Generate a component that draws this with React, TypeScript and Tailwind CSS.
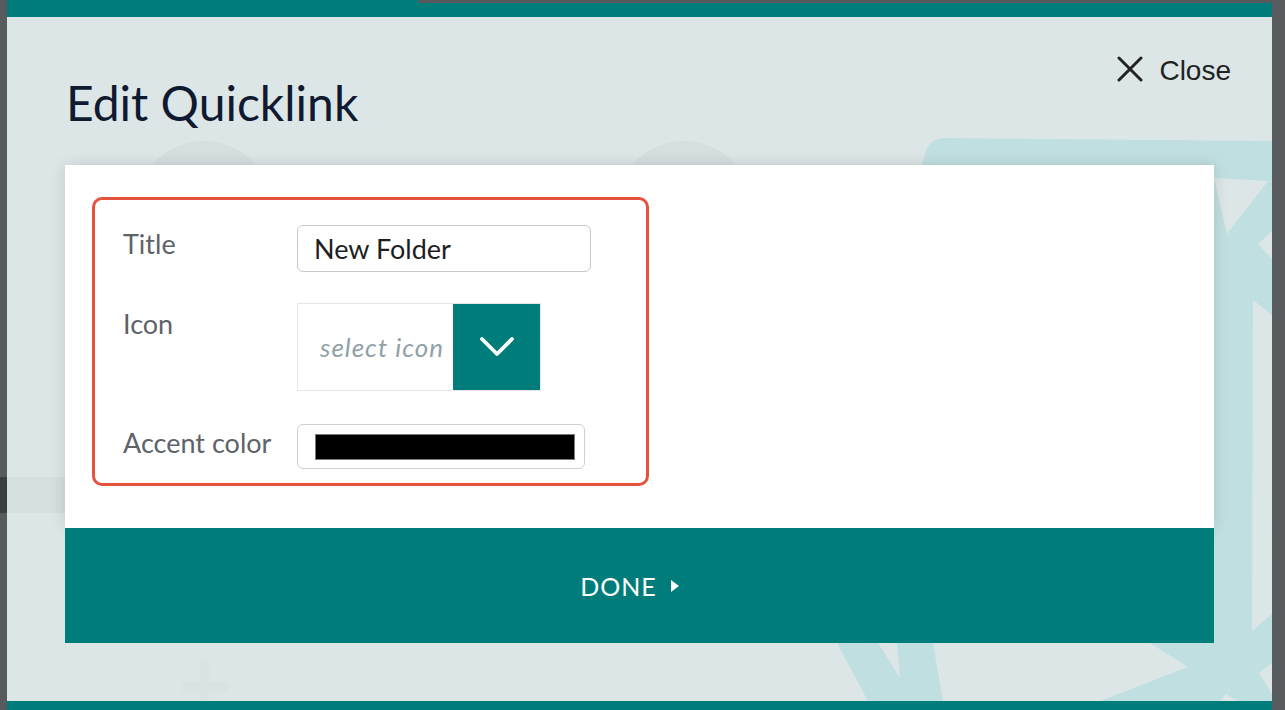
import React from "react";

const TEAL = "#007d7a";

function Decor() {
  return (
    <svg
      className="absolute left-0 top-0"
      width={1265}
      height={684}
      viewBox="0 0 1265 684"
      aria-hidden="true"
    >
      <g transform="translate(-7,-17)">
        {/* faint circles left */}
        <circle cx={204} cy={209} r={68} fill="#d5dfe0" />
        <circle cx={684} cy={209} r={68} fill="#d5dfe0" />
        <rect x={7} y={477} width={58} height={36} fill="#d5dfe0" />
        <rect x={200} y={660} width={9} height={41} fill="#d9e3e4" />
        <rect x={182} y={682} width={46} height={11} rx={4} fill="#d9e3e4" />
        {/* teal geometric shapes */}
        <path
          d="M912 200 L926 150 Q931 138 946 138 L1272 141 L1272 701 L1214 701 L1214 200 Z"
          fill="#c0dfe0"
        />
        <polygon points="1214,178 1268,181 1227,234" fill="#dce6e7" />
        <polygon points="1258,244 1272,231 1272,259" fill="#dce6e7" />
        <polygon points="1253,300 1272,315 1272,614 1252,631" fill="#dce6e7" />
        <polygon points="1259,673 1272,663 1272,694" fill="#dce6e7" />
        <polygon points="1220,701 1226,694 1238,701" fill="#dce6e7" />
        <polygon points="837,643 933,643 943,701 868,701" fill="#c0dfe0" />
        <polygon points="878,643 897,643 900,678" fill="#dce6e7" />
        <polygon points="1150,643 1214,643 1214,701 1100,701 1188,667" fill="#c0dfe0" />
      </g>
    </svg>
  );
}

export default function App() {
  const lato = "font-['Lato','Noto_Sans',sans-serif]";
  return (
    <div className="relative w-[1285px] h-[710px] bg-[#575b5e] overflow-hidden pl-[7px] pr-[13px] flex">
      <div className="flex-1 flex flex-col">
        <div className="h-[17px] bg-[#007d7a]" />
        <div className="relative flex-1 bg-[#dce6e7]">
          <Decor />
          <div className="relative flex justify-between items-start pl-[59px] pr-[41px]">
            <h1 className={`${lato} mt-[58px] text-[48px] leading-[56px] text-[#0f1a31] font-normal`}>
              Edit Quicklink
            </h1>
            <button className="mt-[39px] flex items-start gap-[16px] text-[#222]">
              <svg width="26" height="26" viewBox="0 0 26 26">
                <path
                  d="M2 2 L24 24 M24 2 L2 24"
                  stroke="#222"
                  strokeWidth="3"
                  strokeLinecap="round"
                  fill="none"
                />
              </svg>
              <span className="font-['Liberation_Sans',Arial,sans-serif] text-[28px] leading-[32px] -mt-[1px]">
                Close
              </span>
            </button>
          </div>

          <div className="relative mx-[58px] mt-[34px]">
            <div className="h-[363px] bg-white pt-[32px] pl-[27px] shadow-[0_0_14px_rgba(0,0,0,0.13)]">
              <div className={`${lato} w-[557px] h-[289px] border-[3px] border-[#e4533e] rounded-[10px] pt-[25px] pl-[28px] flex flex-col`}>
                <div className="flex">
                  <div className="w-[174px] pt-[3px] text-[27px] leading-[32px] text-[#5e636a]">Title</div>
                  <div className="w-[294px] h-[47px] border-[1.5px] border-[#c9c9c9] rounded-[6px] pl-[16px] flex items-center text-[27px] leading-[32px] text-[#1e1e1e]">
                    New Folder
                  </div>
                </div>
                <div className="flex mt-[31px]">
                  <div className="w-[174px] pt-[5px] text-[27px] leading-[32px] text-[#5e636a]">Icon</div>
                  <div className="w-[244px] h-[88px] border border-[#e6e6e6] flex">
                    <div className="flex-1 flex items-center pl-[22px] italic text-[26px] leading-[30px] tracking-[1px] text-[#8fa1a9]">
                      select icon
                    </div>
                    <div className="w-[87px] bg-[#007d7a] flex items-center justify-center">
                      <svg width="36" height="24" viewBox="0 0 36 24">
                        <polyline
                          points="3,4 18,19 33,4"
                          fill="none"
                          stroke="white"
                          strokeWidth="3.8"
                          strokeLinecap="round"
                          strokeLinejoin="round"
                        />
                      </svg>
                    </div>
                  </div>
                </div>
                <div className="flex mt-[33px]">
                  <div className="w-[174px] pt-[3px] text-[27px] leading-[32px] text-[#5e636a]">Accent color</div>
                  <div className="w-[288px] h-[45px] border-[1.5px] border-[#cfcfcf] rounded-[6px] flex items-center pl-[17px]">
                    <div className="w-[260px] h-[26px] bg-black border border-[#7a7a7a]" />
                  </div>
                </div>
              </div>
            </div>
            <button
              className={`${lato} w-full h-[115px] bg-[#007d7a] flex items-center justify-center gap-[14px] pr-[20px] text-white`}
              style={{ backgroundColor: TEAL }}
            >
              <span className="text-[25px] leading-[30px] tracking-[1px]">DONE</span>
              <svg width="8" height="12" viewBox="0 0 8 12">
                <polygon points="0,0 8,6 0,12" fill="white" />
              </svg>
            </button>
          </div>
        </div>
        <div className="h-[9px] bg-[#007d7a]" />
      </div>
      <div className="absolute top-0 left-[418px] right-0 h-[3px] bg-[#575b5e]" />
      <div className="absolute left-0 top-[477px] w-[7px] h-[36px] bg-[#3b3f42]" />
    </div>
  );
}
